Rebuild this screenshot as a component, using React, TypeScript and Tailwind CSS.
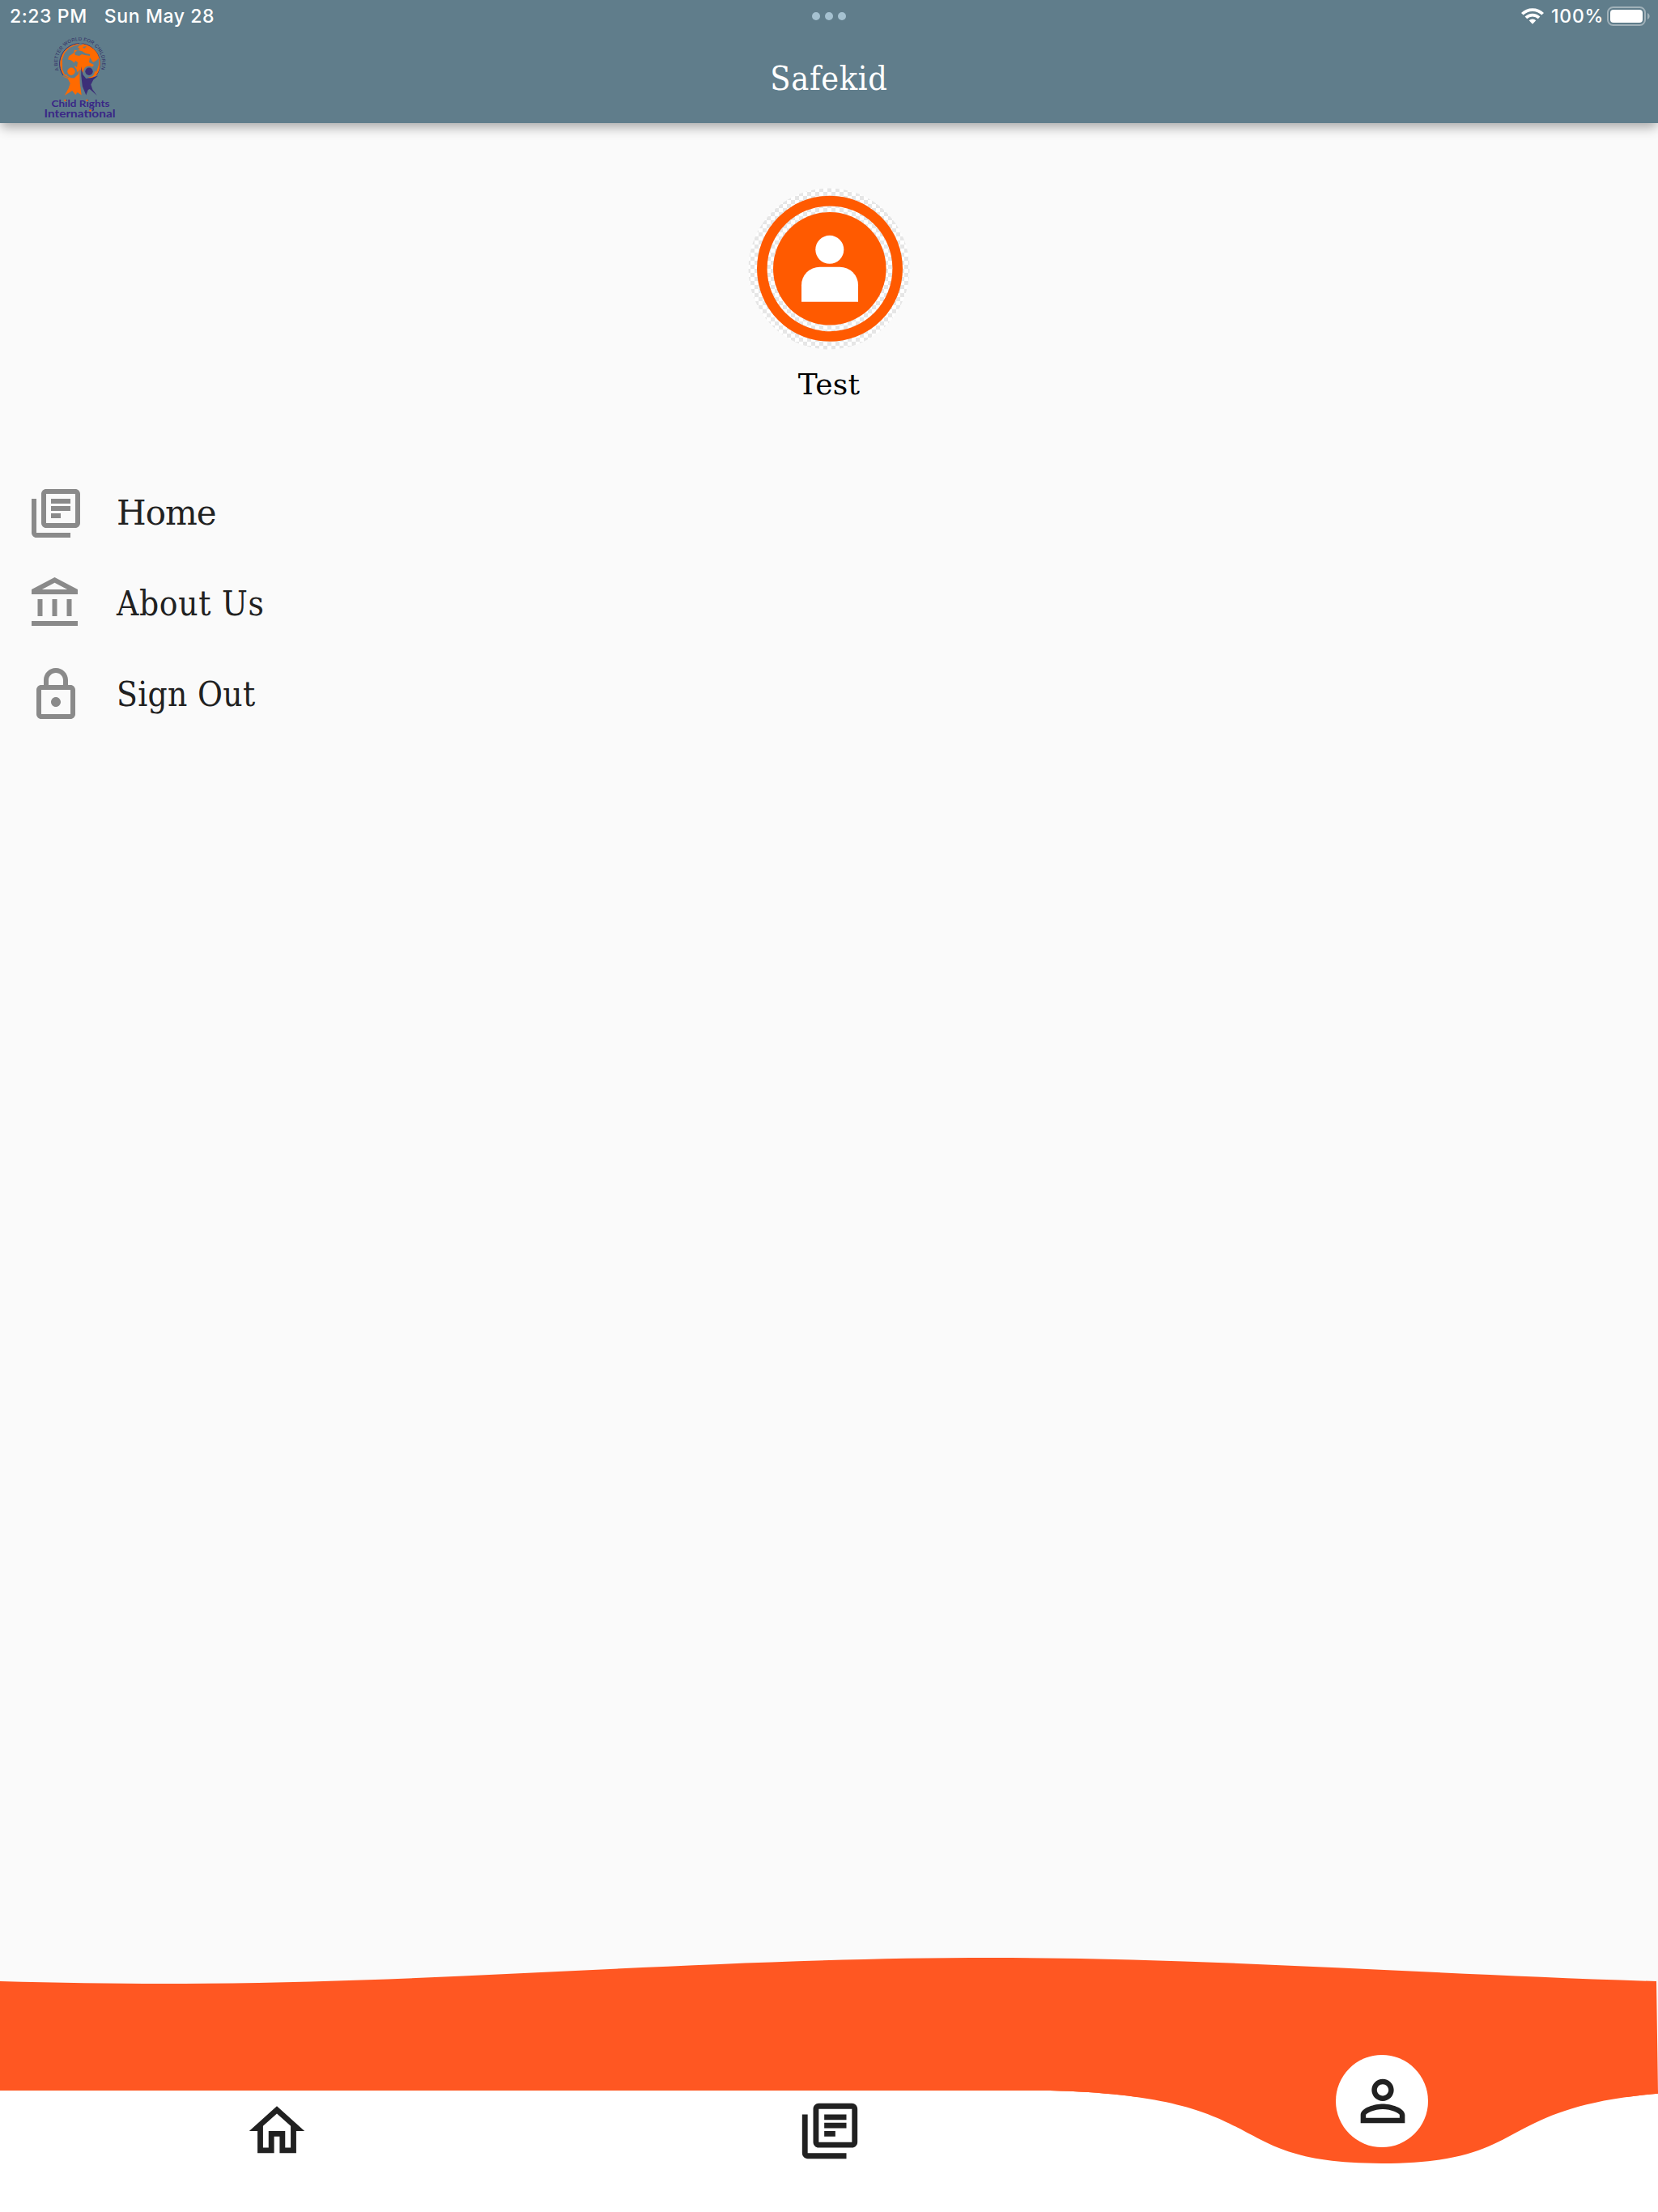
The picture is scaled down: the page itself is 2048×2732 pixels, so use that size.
import React from "react";

type IconProps = { d: string; className: string };

function Icon({ d, className }: IconProps) {
  return (
    <svg viewBox="0 0 24 24" fill="currentColor" className={className}>
      <path fillRule="evenodd" d={d} />
    </svg>
  );
}

const LIBRARY =
  "M8 2h12c1.1 0 2 .9 2 2v12c0 1.1-.9 2-2 2H8c-1.1 0-2-.9-2-2V4c0-1.1.9-2 2-2zM8 4v12h12V4zM10 6h8v2h-8zM10 9h8v2h-8zM10 12h4v2h-4zM2 6h2v14h14v2H4c-1.1 0-2-.9-2-2z";
const BANK =
  "M6.5 10h-2v7h2zM12.5 10h-2v7h2zM21 19H2v2h19zM18.5 10h-2v7h2zM11.5 3.26L16.71 6H6.29zM11.5 1L2 6v2h19V6z";
const LOCK =
  "M18 8h-1V6c0-2.76-2.24-5-5-5S7 3.24 7 6v2H6c-1.1 0-2 .9-2 2v10c0 1.1.9 2 2 2h12c1.1 0 2-.9 2-2V10c0-1.1-.9-2-2-2zM9 6c0-1.66 1.34-3 3-3s3 1.34 3 3v2H9V6zm9 14H6V10h12v10zm-6-3c1.1 0 2-.9 2-2s-.9-2-2-2-2 .9-2 2 .9 2 2 2z";
const HOME =
  "M12 5.69l5 4.5V18h-2v-6H9v6H7v-7.81zM12 3L2 12h3v8h6v-6h2v6h6v-8h3z";
const PERSON =
  "M12 5.9c1.16 0 2.1.94 2.1 2.1s-.94 2.1-2.1 2.1S9.9 9.16 9.9 8s.94-2.1 2.1-2.1zm0 9c2.97 0 6.1 1.46 6.1 2.1v1.1H5.9V17c0-.64 3.13-2.1 6.1-2.1zM12 4C9.79 4 8 5.79 8 8s1.79 4 4 4 4-1.79 4-4-1.79-4-4-4zm0 9c-2.67 0-8 1.34-8 4v3h16v-3c0-2.66-5.33-4-8-4z";

function Logo() {
  return (
    <svg viewBox="0 0 116 116" className="block h-[116px] w-[116px]">
      <defs>
        <path id="motto" d="M32.6 51A27.6 27.6 0 1 1 84.6 51" />
      </defs>
      <text fontFamily="Liberation Sans" fontSize="6" fill="#2f2a63">
        <textPath href="#motto" textLength="104">A BETTER WORLD FOR CHILDREN</textPath>
      </text>
      <path d="M38 57A25 25 0 1 1 79 57" fill="none" stroke="#3b2f6f" strokeWidth="1" />
      <path d="M39 57A24.6 24.6 0 1 1 79 57L72 62 59 50 46 60z" fill="#ff6a00" />
      <g fill="#607d8b">
        <path d="M37 37l3-8 6-6 7-3 6-.5-3 3 3 2-4 2-3-1-1 4-6 4-1 4 4 1 5 4-1 6-5 2-2 5-5 1-3-7z" />
        <path d="M52 29l4-3 5 1 5 3 5 1v2l-6-1-4-1-3 2-5-1zM56 19l3-2 4 1-3 2zM62 22l5-1-3 3zM71 35l4 6 5-3 2-2v8l-3 9-6-5 3-4-6-3zM51 44l2-5 3 2-1 6z" />
      </g>
      <circle cx="48" cy="52.5" r="7" fill="#607d8b" />
      <circle cx="70" cy="52.5" r="7" fill="#607d8b" />
      <circle cx="48" cy="52.3" r="4.7" fill="#ff6a00" />
      <circle cx="70" cy="52.3" r="4.7" fill="#3c2f78" />
      <path d="M35.5 57.5l9 2.5 7 .5 5.5-5 1-10 .7 22 2 14-5-3.500-2.500 3-4-5-9.500 6 5-9 2-6-3-6z" fill="#ff6a00" />
      <path d="M60.300 46l2 10 4 5 7-1 8-2.500-6 5-3 6 2 6 5.500 7.500-9-8-2 1-2.500 6.500-4.500-11-1.500-13z" fill="#3c2f78" />
      <text x="23.500" y="96.300" textLength="72" lengthAdjust="spacingAndGlyphs" fontFamily="Lato" fontSize="11.800" fontWeight="700" fill="#3a2786">Child Rights</text>
      <text x="14.500" y="109" textLength="88" lengthAdjust="spacingAndGlyphs" fontFamily="Lato" fontSize="13" fontWeight="700" fill="#3a2786">International</text>
      <circle cx="40.500" cy="88" r="1.200" fill="#ff6a00" />
      <circle cx="67.500" cy="88" r="1.200" fill="#ff6a00" />
      <path d="M73.500 97q3.500 1.500 .5 4" fill="none" stroke="#3a2786" strokeWidth="1.600" />
      <circle cx="71.500" cy="100.500" r="1.200" fill="#ff6a00" />
    </svg>
  );
}

function StatusBar() {
  return (
    <div className="grid h-[40px] grid-cols-3 items-center text-[23px] font-medium leading-none text-white">
      <div className="flex gap-[21px] pl-[12px] tracking-[0.6px]">
        <span>2:23 PM</span>
        <span>Sun May 28</span>
      </div>
      <div className="flex justify-center gap-[6px]">
        <span className="size-[10px] rounded-full bg-[#a5c1d0]" />
        <span className="size-[10px] rounded-full bg-[#a5c1d0]" />
        <span className="size-[10px] rounded-full bg-[#a5c1d0]" />
      </div>
      <div className="flex items-center justify-end pr-[9px]">
        <svg viewBox="0 0 28 20" className="mr-[9px] h-[20px] w-[28px]">
          <g fill="none" stroke="#fff" strokeWidth="3.700">
            <path d="M1.300 7.300a18 18 0 0 1 25.400 0" />
            <path d="M5.900 11.900a11.500 11.500 0 0 1 16.200 0" />
          </g>
          <path d="M9.700 15.300a6.300 6.300 0 0 1 8.600 0L14 19.800z" fill="#fff" />
        </svg>
        <span className="mr-[4px] tracking-[0.7px]">100%</span>
        <svg viewBox="0 0 54 24" className="h-[24px] w-[54px]">
          <rect x="1" y="1" width="46" height="22" rx="6.500" fill="none" stroke="#a0b1b9" strokeWidth="2" />
          <rect x="4" y="4" width="40" height="16" rx="4" fill="#fff" />
          <path d="M50 8c3.500 1.500 3.500 6.500 0 8z" fill="#a0b1b9" />
        </svg>
      </div>
    </div>
  );
}

function Avatar() {
  return (
    <svg viewBox="924 232 200 200" className="block size-[200px]">
      <defs>
        <pattern id="checks" x="1022" y="232" width="10" height="10" patternUnits="userSpaceOnUse">
          <rect width="10" height="10" fill="#fff" />
          <rect width="5" height="5" fill="#e6e6e6" />
          <rect x="5" y="5" width="5" height="5" fill="#e6e6e6" />
        </pattern>
      </defs>
      <circle cx="1024" cy="332" r="99.500" fill="url(#checks)" />
      <circle cx="1025" cy="331.800" r="83.700" fill="none" stroke="#ff5a00" strokeWidth="12.600" />
      <circle cx="1024.800" cy="331.800" r="69.800" fill="#ff5a00" />
      <circle cx="1024.800" cy="308.300" r="17.500" fill="#fff" />
      <path d="M990 372.700v-20.500a22.500 22.500 0 0 1 22.500-22.500h25a22.500 22.500 0 0 1 22.500 22.500v20.500z" fill="#fff" />
    </svg>
  );
}

const MENU = [
  { label: "Home", icon: LIBRARY, face: "-mt-px font-['DejaVu_Serif',serif] tracking-[-1px]" },
  {
    label: "About Us",
    icon: BANK,
    face: "font-['DejaVu_Serif_Condensed','DejaVu_Serif',serif] [font-stretch:condensed] tracking-[0.7px]",
  },
  {
    label: "Sign Out",
    icon: LOCK,
    face: "font-['DejaVu_Serif_Condensed','DejaVu_Serif',serif] [font-stretch:condensed] tracking-[0.3px]",
  },
];

export default function App() {
  return (
    <div className="flex h-[2732px] w-[2048px] flex-col overflow-hidden bg-[#fafafa] font-['Inter',sans-serif]">
      <header className="h-[152px] shrink-0 bg-[#607d8b] shadow-[0_8px_14px_-2px_rgba(0,0,0,0.24),0_4px_10px_rgba(0,0,0,0.1)]">
        <StatusBar />
        <div className="grid h-[112px] grid-cols-3 items-center">
          <div className="-mt-[4px] pl-[40px]">
            <Logo />
          </div>
          <h1 className="mt-px text-center font-['DejaVu_Serif_Condensed','DejaVu_Serif',serif] text-[41px] leading-[50px] tracking-[0.7px] [font-stretch:condensed] text-white">
            Safekid
          </h1>
        </div>
      </header>

      <main className="flex grow flex-col pt-[80px]">
        <section className="flex flex-col items-center">
          <Avatar />
          <p className="mt-[18px] font-['DejaVu_Serif',serif] text-[36px] leading-[50px] tracking-[0.3px] text-black">
            Test
          </p>
        </section>
        <nav className="mt-[78px] flex flex-col">
          {MENU.map((m) => (
            <a key={m.label} className="flex h-[112px] items-center gap-[39px] pl-[33px] text-[42px] leading-[50px] text-[#212121]">
              <Icon d={m.icon} className="size-[72px] text-[#8a8a8a]" />
              <span className={m.face}>{m.label}</span>
            </a>
          ))}
        </nav>
      </main>

      <footer className="relative h-[314px] shrink-0">
        <svg viewBox="0 2418 2048 314" className="absolute inset-0 h-[314px] w-[2048px]">
          <rect x="0" y="2582" width="2048" height="150" fill="#fff" />
          <path
            d="M0 2447C70 2449 140 2450 200 2450C560 2450 860 2418 1226 2418C1500 2418 1750 2438 2046 2447L2048 2585V2590H0z"
            fill="#ff5722"
          />
          <path
            d="M0 2582H1297C1583.800 2589.500 1501.900 2672 1706.700 2672C1911.500 2672 1829.500 2589.500 2116.300 2582V2732H0z"
            fill="#fff"
          />
          <path
            d="M1297 2582C1583.800 2589.500 1501.900 2672 1706.700 2672C1911.500 2672 1829.500 2589.500 2116.300 2582z"
            fill="#ff5722"
          />
        </svg>
        <div className="relative grid grid-cols-3 justify-items-center pt-[173px] text-[#212121]">
          <Icon d={HOME} className="ml-[2px] size-[82px]" />
          <Icon d={LIBRARY} className="ml-[2px] size-[82px]" />
          <span className="-mt-[53px] flex size-[114px] items-center justify-center rounded-full bg-white">
            <Icon d={PERSON} className="ml-[2px] size-[82px]" />
          </span>
        </div>
      </footer>
    </div>
  );
}
